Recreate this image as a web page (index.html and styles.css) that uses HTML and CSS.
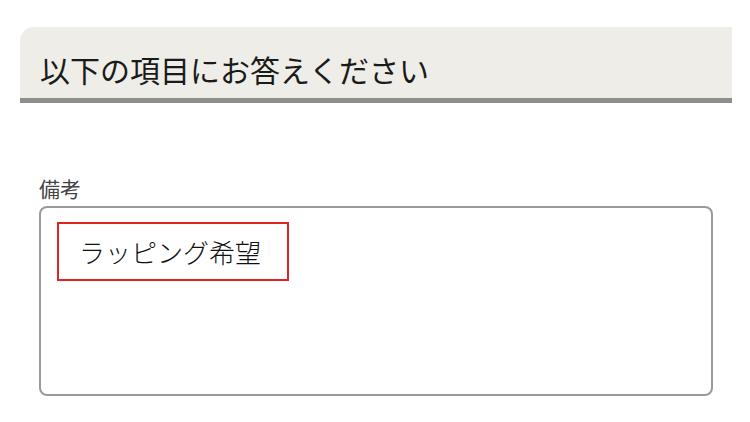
FILE: index.html
```html
<!DOCTYPE html>
<html lang="ja">
<head>
    <meta charset="UTF-8">
    <meta name="viewport" content="width=device-width, initial-scale=1.0">
    <title>備考</title>
    <link rel="stylesheet" href="styles.css">
</head>
<body>
    <div class="page">
        <div class="section-head">
            <h2 class="section-title">以下の項目にお答えください</h2>
        </div>

        <div class="field">
            <label class="field-label">備考</label>
            <div class="note-box">
                <span class="note-mark">ラッピング希望</span>
            </div>
        </div>
    </div>
</body>
</html>
```

FILE: styles.css
```css
/* General */
body {
    margin: 0;
    background: #fff;
    font-family: "Noto Sans CJK JP", "Noto Sans", sans-serif;
    color: #222;
}

.page {
    padding: 27px 18px 0 20px;
}

/* Section header */
.section-head {
    height: 71px;
    background: #eeede7;
    border-bottom: 5px solid #8e8e8c;
    border-top-left-radius: 14px;
    padding-left: 20px;
    display: flex;
    align-items: flex-end;
}

.section-title {
    margin: 0 0 9px;
    font-size: 30px;
    font-weight: normal;
    line-height: 40px;
    color: #1a1a1a;
}

/* Field */
.field {
    margin-top: 71px;
    padding: 0 19px;
}

.field-label {
    display: block;
    font-size: 21px;
    line-height: 28px;
    color: #444;
    margin-bottom: 4px;
}

.note-box {
    height: 190px;
    border: 2px solid #9a9a9a;
    border-radius: 8px;
    padding: 14px 16px;
    box-sizing: border-box;
}

.note-mark {
    display: inline-block;
    border: 2px solid #e02424;
    padding: 0 20px;
    height: 59px;
    width: 232px;
    box-sizing: border-box;
    font-size: 26px;
    font-weight: 300;
    line-height: 55px;
    color: #111;
}
```
